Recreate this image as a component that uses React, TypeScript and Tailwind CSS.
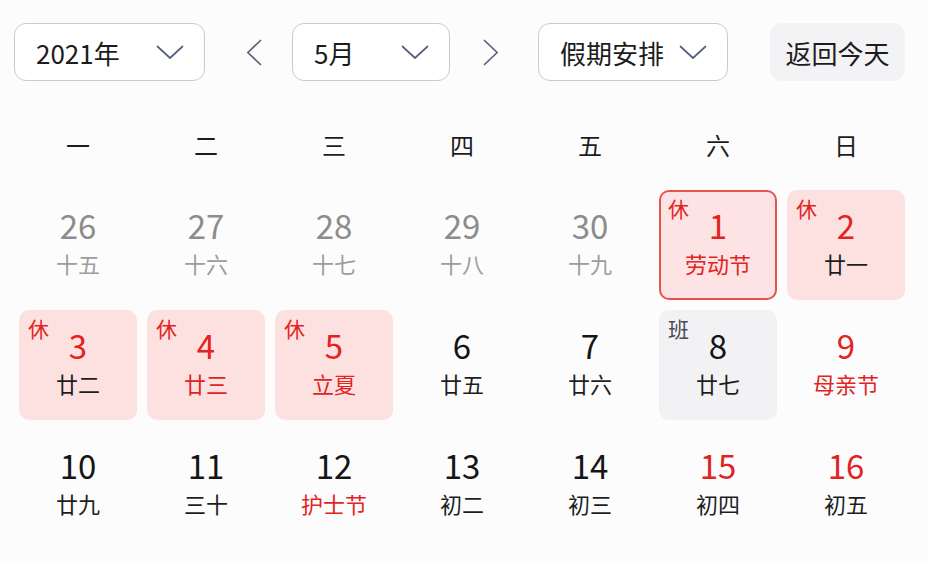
import React from 'react';

type Day = {
  n: number;
  lunar: string;
  other?: boolean;
  redNum?: boolean;
  redLunar?: boolean;
  tag?: '休' | '班';
  today?: boolean;
};

const WEEK = ['一', '二', '三', '四', '五', '六', '日'];

const ROWS: Day[][] = [
  [
    { n: 26, lunar: '十五', other: true },
    { n: 27, lunar: '十六', other: true },
    { n: 28, lunar: '十七', other: true },
    { n: 29, lunar: '十八', other: true },
    { n: 30, lunar: '十九', other: true },
    { n: 1, lunar: '劳动节', redNum: true, redLunar: true, tag: '休', today: true },
    { n: 2, lunar: '廿一', redNum: true, tag: '休' },
  ],
  [
    { n: 3, lunar: '廿二', redNum: true, tag: '休' },
    { n: 4, lunar: '廿三', redNum: true, redLunar: true, tag: '休' },
    { n: 5, lunar: '立夏', redNum: true, redLunar: true, tag: '休' },
    { n: 6, lunar: '廿五' },
    { n: 7, lunar: '廿六' },
    { n: 8, lunar: '廿七', tag: '班' },
    { n: 9, lunar: '母亲节', redNum: true, redLunar: true },
  ],
  [
    { n: 10, lunar: '廿九' },
    { n: 11, lunar: '三十' },
    { n: 12, lunar: '护士节', redLunar: true },
    { n: 13, lunar: '初二' },
    { n: 14, lunar: '初三' },
    { n: 15, lunar: '初四', redNum: true },
    { n: 16, lunar: '初五', redNum: true },
  ],
];

function ChevronDown() {
  return (
    <svg width="28" height="15" viewBox="0 0 28 15" fill="none">
      <path d="M1.5 1.5 L14 13 L26.5 1.5" stroke="#56607c" strokeWidth="1.7" strokeLinecap="round" strokeLinejoin="round" />
    </svg>
  );
}

function Arrow({ dir }: { dir: 'left' | 'right' }) {
  return (
    <svg width="16" height="27" viewBox="0 0 16 27" fill="none">
      <path
        d={dir === 'left' ? 'M14.5 1.5 L1.8 13.5 L14.5 25.5' : 'M1.5 1.5 L14.2 13.5 L1.5 25.5'}
        stroke="#56607c"
        strokeWidth="1.7"
        strokeLinecap="round"
        strokeLinejoin="round"
      />
    </svg>
  );
}

function Select({ label, width }: { label: string; width: string }) {
  return (
    <div
      className={`${width} flex h-[58px] shrink-0 items-center justify-between rounded-[12px] border border-[#c9c9d2] bg-white pl-[21px] pr-[20px] text-[26px] text-[#1c1c1c]`}
    >
      <span>{label}</span>
      <ChevronDown />
    </div>
  );
}

function Cell({ d }: { d: Day }) {
  let box = 'border-2 border-transparent';
  if (d.tag === '休') box = 'bg-[#fde1e1] border-2 border-transparent';
  if (d.today) box = 'bg-[#fde3e3] border-2 border-[#e4544f]';
  if (d.tag === '班') box = 'bg-[#f2f1f4] border-2 border-transparent';

  const numColor = d.other ? 'text-[#8c8c8c]' : d.redNum ? 'text-[#e2231f]' : 'text-[#151515]';
  const lunarColor = d.other ? 'text-[#9d9d9d]' : d.redLunar ? 'text-[#e2231f]' : 'text-[#1e1e1e]';

  return (
    <div className="h-[120px] p-[5px]">
      <div className={`relative flex h-full flex-col items-center rounded-[10px] pt-[15px] ${box}`}>
        {d.tag && (
          <span
            className={`absolute left-[7px] top-[4px] text-[21px] leading-[24px] ${
              d.tag === '休' ? 'text-[#e2231f]' : 'text-[#4a4a55]'
            }`}
          >
            {d.tag}
          </span>
        )}
        <span className={`text-[33px] leading-[36px] ${numColor}`}>{d.n}</span>
        <span className={`mt-[6px] text-[22px] leading-[28px] ${lunarColor}`}>{d.lunar}</span>
      </div>
    </div>
  );
}

export default function App() {
  return (
    <div
      className="h-[562px] w-[928px] overflow-hidden bg-[#fdfcfd]"
      style={{ fontFamily: '"Noto Sans CJK SC", "Noto Sans", sans-serif' }}
    >
      {/* Toolbar */}
      <div className="flex items-center pl-[14px] pt-[23px]">
        <Select label="2021年" width="w-[191px]" />
        <button className="ml-[41px] flex h-[58px] items-center">
          <Arrow dir="left" />
        </button>
        <div className="ml-[30px]">
          <Select label="5月" width="w-[158px]" />
        </div>
        <button className="ml-[33px] flex h-[58px] items-center">
          <Arrow dir="right" />
        </button>
        <div className="ml-[39px]">
          <Select label="假期安排" width="w-[190px]" />
        </div>
        <button className="ml-[42px] flex h-[58px] w-[135px] items-center justify-center rounded-[12px] bg-[#f3f2f5] text-[26px] text-[#1c1c1c]">
          返回今天
        </button>
      </div>

      {/* Week header */}
      <div className="ml-[14px] mt-[38px] grid w-[896px] grid-cols-7">
        {WEEK.map((w) => (
          <div key={w} className="flex h-[52px] items-center justify-center text-[24px] text-[#1c1c1c]">
            {w}
          </div>
        ))}
      </div>

      {/* Days */}
      <div className="ml-[14px] mt-[14px] grid w-[896px] grid-cols-7">
        {ROWS.flat().map((d, i) => (
          <Cell key={i} d={d} />
        ))}
      </div>
    </div>
  );
}
